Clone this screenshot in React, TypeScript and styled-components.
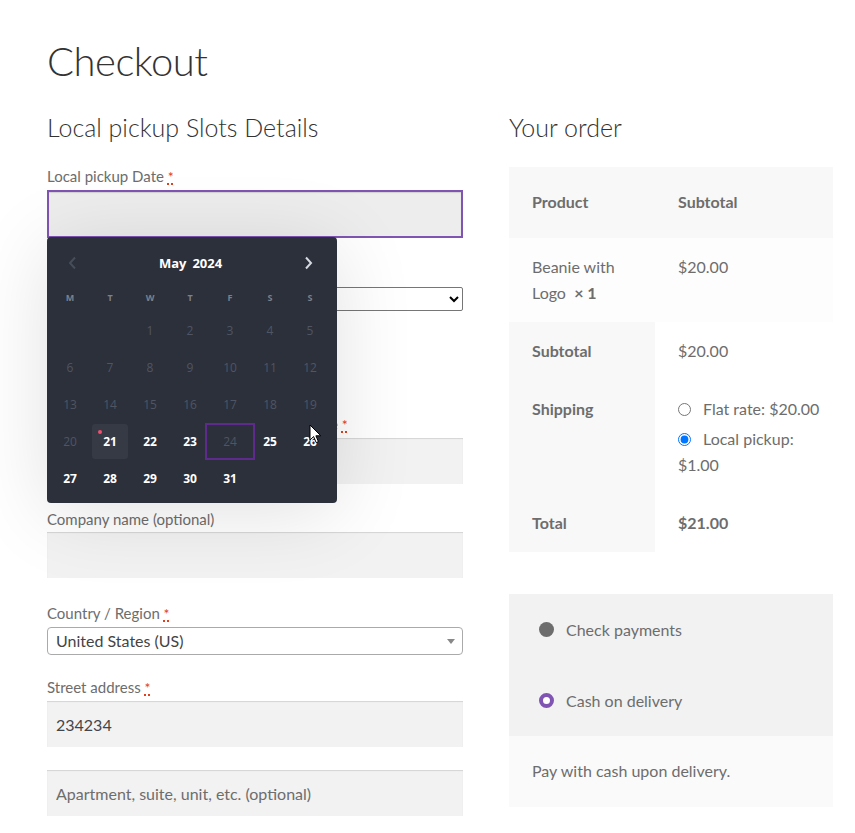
import React from 'react'
import styled, { createGlobalStyle } from 'styled-components'

const GlobalStyle = createGlobalStyle`
  body {
    margin: 0;
    background: #fff;
    font-family: Lato, "Liberation Sans", sans-serif;
    color: #6d6d6d;
  }
`

const days = [
  ['', '', '1', '2', '3', '4', '5'],
  ['6', '7', '8', '9', '10', '11', '12'],
  ['13', '14', '15', '16', '17', '18', '19'],
  ['20', '21', '22', '23', '24', '25', '26'],
  ['27', '28', '29', '30', '31', '', ''],
]
const enabled = ['21', '22', '23', '25', '26', '27', '28', '29', '30', '31']

const Required = () => <S.Req title="required">*</S.Req>

const Cursor = () => (
  <S.Cursor width="13" height="20" viewBox="0 0 13 20">
    <path d="M1 1 L1 16 L4.6 12.6 L7.2 18.6 L9.4 17.6 L6.9 11.8 L11.8 11.8 Z" fill="#fff" stroke="#000" strokeWidth="1" strokeLinejoin="round" />
  </S.Cursor>
)

const Calendar = () => (
  <S.Calendar>
    <S.CalHead>
      <S.Arrow $disabled>
        <svg width="9" height="14" viewBox="0 0 9 14">
          <path d="M7 1.5 L2 7 L7 12.5" fill="none" stroke="currentColor" strokeWidth="2" />
        </svg>
      </S.Arrow>
      <S.Month>
        <span>May</span>
        <span>2024</span>
      </S.Month>
      <S.Arrow>
        <svg width="9" height="14" viewBox="0 0 9 14">
          <path d="M2 1.5 L7 7 L2 12.5" fill="none" stroke="currentColor" strokeWidth="2" />
        </svg>
      </S.Arrow>
    </S.CalHead>
    <S.Grid>
      {['M', 'T', 'W', 'T', 'F', 'S', 'S'].map((d, i) => (
        <S.WeekDay key={i}>{d}</S.WeekDay>
      ))}
      {days.flat().map((d, i) => (
        <S.Day key={i} $on={enabled.includes(d)} $today={d === '21'} $focus={d === '24'}>
          {d === '21' && <S.Dot />}
          {d}
        </S.Day>
      ))}
    </S.Grid>
    <Cursor />
  </S.Calendar>
)

const App = () => {
  return (
    <>
      <GlobalStyle />
      <S.Page>
        <S.Title>Checkout</S.Title>
        <S.Columns>
          <S.Left>
            <S.Heading>Local pickup Slots Details</S.Heading>
            <S.Field>
              <S.Label>
                Local pickup Date&nbsp;<Required />
              </S.Label>
              <S.DateWrap>
                <S.Input $focused />
                <Calendar />
              </S.DateWrap>
            </S.Field>
            <S.Field>
              <S.Label>
                Local pickup Time Slot <Required />
              </S.Label>
              <S.NativeSelect defaultValue="">
                <option value="">Select a time slot</option>
              </S.NativeSelect>
            </S.Field>
            <S.Heading $spaced>Billing details</S.Heading>
            <S.Row>
              <S.Field>
                <S.Label>
                  First name <Required />
                </S.Label>
                <S.Input />
              </S.Field>
              <S.Field>
                <S.Label>
                  Last name <Required />
                </S.Label>
                <S.Input />
              </S.Field>
            </S.Row>
            <S.Field>
              <S.Label>Company name (optional)</S.Label>
              <S.Input />
            </S.Field>
            <S.Field $tight>
              <S.Label>
                Country / Region <Required />
              </S.Label>
              <S.FakeSelect>
                United States (US)
                <S.Caret />
              </S.FakeSelect>
            </S.Field>
            <S.Field>
              <S.Label>
                Street address <Required />
              </S.Label>
              <S.Input defaultValue="234234" />
            </S.Field>
            <S.Field>
              <S.Input placeholder="Apartment, suite, unit, etc. (optional)" />
            </S.Field>
          </S.Left>

          <S.Right>
            <S.Heading>Your order</S.Heading>
            <S.Table>
              <colgroup>
                <col style={{ width: 146 }} />
                <col />
              </colgroup>
              <thead>
                <tr>
                  <S.Th $head>Product</S.Th>
                  <S.Th $head>Subtotal</S.Th>
                </tr>
              </thead>
              <tbody>
                <tr>
                  <S.Td $body>
                    Beanie with Logo&nbsp;&nbsp;<strong>×&nbsp;1</strong>
                  </S.Td>
                  <S.Td $body>$20.00</S.Td>
                </tr>
              </tbody>
              <tfoot>
                <tr>
                  <S.Th>Subtotal</S.Th>
                  <S.Td>$20.00</S.Td>
                </tr>
                <tr>
                  <S.Th>Shipping</S.Th>
                  <S.Td>
                    <S.ShipList>
                      <li>
                        <S.ShipRadio type="radio" name="ship" />
                        Flat rate: $20.00
                      </li>
                      <li>
                        <S.ShipRadio type="radio" name="ship" defaultChecked />
                        Local pickup: $1.00
                      </li>
                    </S.ShipList>
                  </S.Td>
                </tr>
                <tr>
                  <S.Th>Total</S.Th>
                  <S.Td>
                    <strong>$21.00</strong>
                  </S.Td>
                </tr>
              </tfoot>
            </S.Table>

            <S.Payment>
              <S.Method>
                <S.Bullet />
                Check payments
              </S.Method>
              <S.Method>
                <S.Bullet $checked />
                Cash on delivery
              </S.Method>
              <S.PayBox>Pay with cash upon delivery.</S.PayBox>
            </S.Payment>
          </S.Right>
        </S.Columns>
      </S.Page>
    </>
  )
}

export default App

const S = {
  Page: styled.div`
    padding: 37px 22px 0 47px;
  `,
  Title: styled.h1`
    margin: 0 0 24px;
    font-size: 40px;
    line-height: 1.2;
    font-weight: 300;
    color: #333;
    letter-spacing: -0.5px;
  `,
  Columns: styled.div`
    display: grid;
    grid-template-columns: 416px 324px;
    column-gap: 46px;
    align-items: start;
  `,
  Left: styled.div``,
  Right: styled.div``,
  Heading: styled.h3<{ $spaced?: boolean }>`
    margin: ${(p) => (p.$spaced ? '46px' : '0')} 0 19px;
    font-size: 25px;
    line-height: 36px;
    font-weight: 300;
    color: #333;
  `,
  Field: styled.div<{ $tight?: boolean }>`
    margin-bottom: ${(p) => (p.$tight ? '20px' : '23px')};
    min-width: 0;
  `,
  Row: styled.div`
    display: grid;
    grid-template-columns: 1fr 1fr;
    column-gap: 32px;
  `,
  Label: styled.label`
    display: block;
    font-size: 15px;
    line-height: 24px;
    margin-bottom: 1px;
    color: #6d6d6d;
    white-space: nowrap;
  `,
  Req: styled.abbr`
    color: #e2401c;
    text-decoration: underline dotted;
    text-decoration-thickness: 2px;
    font-size: 14px;
  `,
  DateWrap: styled.div`
    position: relative;
  `,
  Input: styled.input<{ $focused?: boolean }>`
    display: block;
    box-sizing: border-box;
    width: 100%;
    height: ${(p) => (p.$focused ? '48px' : '46px')};
    margin: 0;
    padding: 0 9px;
    border: ${(p) => (p.$focused ? '2px solid #7f54b3' : '0')};
    background: ${(p) => (p.$focused ? '#ededed' : '#f2f2f2')};
    box-shadow: inset 0 1px 1px rgba(0, 0, 0, 0.125);
    font-family: inherit;
    font-size: 16px;
    color: #43454b;
    outline: none;
    &::placeholder {
      color: #6d6d6d;
    }
  `,
  NativeSelect: styled.select`
    display: block;
    width: 100%;
    height: 24px;
    border: 1px solid #767676;
    border-radius: 2px;
    background: #fff;
    font-size: 13px;
  `,
  FakeSelect: styled.div`
    position: relative;
    box-sizing: border-box;
    height: 28px;
    padding: 0 8px;
    border: 1px solid #aaa;
    border-radius: 4px;
    background: #fff;
    font-size: 16px;
    line-height: 26px;
    color: #444;
  `,
  Caret: styled.span`
    position: absolute;
    right: 7px;
    top: 11px;
    border-left: 4px solid transparent;
    border-right: 4px solid transparent;
    border-top: 5px solid #888;
  `,
  Calendar: styled.div`
    position: absolute;
    top: 47px;
    left: 0;
    z-index: 5;
    box-sizing: border-box;
    width: 290px;
    height: 266px;
    padding: 12px 7px 0 3px;
    background: #2b303b;
    border-radius: 4px;
    box-shadow: 0 10px 80px rgba(0, 0, 0, 0.12);
    font-family: "Open Sans", "Liberation Sans", sans-serif;
  `,
  CalHead: styled.div`
    display: flex;
    align-items: center;
    justify-content: space-between;
    height: 28px;
    padding: 0 17px 0 18px;
  `,
  Arrow: styled.span<{ $disabled?: boolean }>`
    display: flex;
    color: ${(p) => (p.$disabled ? '#474d59' : '#d6dae0')};
  `,
  Month: styled.div`
    display: flex;
    gap: 6px;
    font-size: 13px;
    font-weight: 700;
    color: #fff;
  `,
  Grid: styled.div`
    display: grid;
    grid-template-columns: repeat(7, 40px);
    grid-template-rows: 29px;
    grid-auto-rows: 37px;
    margin-top: 6px;
  `,
  WeekDay: styled.div`
    display: flex;
    align-items: center;
    justify-content: center;
    font-size: 9px;
    font-weight: 700;
    color: #7b808a;
  `,
  Day: styled.div<{ $on?: boolean; $today?: boolean; $focus?: boolean }>`
    position: relative;
    display: flex;
    align-items: center;
    justify-content: center;
    font-size: 12px;
    font-weight: ${(p) => (p.$on ? 700 : 400)};
    color: ${(p) => (p.$on ? '#fff' : '#4f5563')};
    ${(p) =>
      p.$today &&
      `
      margin: 1px 2px;
      background: #353a45;
      border-radius: 3px;
    `}
    ${(p) =>
      p.$focus &&
      `
      margin: 0 -5px;
      border: 2px solid #5e2a8c;
    `}
  `,
  Dot: styled.span`
    position: absolute;
    top: 6px;
    left: 6px;
    width: 4px;
    height: 4px;
    border-radius: 50%;
    background: #f0506e;
  `,
  Cursor: styled.svg`
    position: absolute;
    left: 262px;
    top: 187px;
    z-index: 6;
  `,
  Table: styled.table`
    width: 100%;
    table-layout: fixed;
    border-collapse: collapse;
    border-spacing: 0;
    margin: 22px 0 42px;
    font-size: 16px;
    line-height: 26px;
    color: #6d6d6d;
    strong {
      font-weight: 700;
    }
  `,
  Th: styled.th<{ $head?: boolean }>`
    box-sizing: border-box;
    padding: ${(p) => (p.$head ? '22px 23px 23px' : '16px 23px')};
    background: #f8f8f8;
    text-align: left;
    vertical-align: top;
    font-weight: 700;
  `,
  Td: styled.td<{ $body?: boolean }>`
    padding: 16px 23px;
    background: ${(p) => (p.$body ? '#fdfdfd' : '#fff')};
    vertical-align: top;
  `,
  ShipList: styled.ul`
    list-style: none;
    margin: 0;
    padding: 0;
    li {
      margin-bottom: 4px;
    }
    li:first-child {
      white-space: nowrap;
    }
    li:last-child {
      margin-bottom: 0;
    }
  `,
  ShipRadio: styled.input`
    width: 13px;
    height: 13px;
    margin: 0 12px 0 0;
    vertical-align: -1px;
  `,
  Payment: styled.div`
    background: #f2f2f2;
  `,
  Method: styled.div`
    display: flex;
    align-items: center;
    gap: 12px;
    height: 71px;
    padding: 0 23px 0 30px;
    font-size: 16px;
    color: #6d6d6d;
  `,
  Bullet: styled.span<{ $checked?: boolean }>`
    box-sizing: border-box;
    width: 15px;
    height: 15px;
    border-radius: 50%;
    background: ${(p) => (p.$checked ? '#fff' : '#6d6d6d')};
    border: ${(p) => (p.$checked ? '4px solid #7f54b3' : '0')};
  `,
  PayBox: styled.div`
    padding: 22px 23px 23px;
    background: #fafafa;
    font-size: 16px;
    line-height: 26px;
    color: #6d6d6d;
  `,
}
